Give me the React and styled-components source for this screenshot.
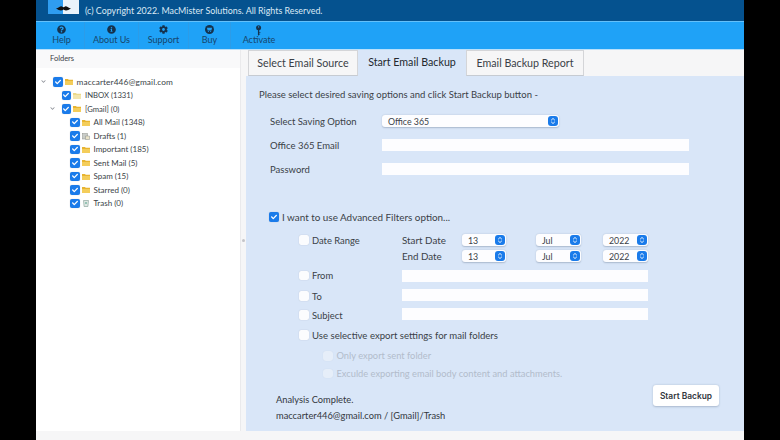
import React from 'react'
import styled, { createGlobalStyle } from 'styled-components'
import { FaCheck, FaChevronDown, FaCog, FaInfoCircle, FaQuestionCircle } from 'react-icons/fa'

const GlobalStyle = createGlobalStyle`
	html, body {
		margin: 0;
		background: #000;
		font-family: Lato, 'Open Sans', sans-serif;
		color: #3a3f47;
	}
	* {
		box-sizing: border-box;
	}
`

const tools = [
	{ name: 'Help', width: 46, icon: <FaQuestionCircle /> },
	{ name: 'About Us', width: 54, icon: <FaInfoCircle /> },
	{ name: 'Support', width: 50, icon: <FaCog /> },
	{ name: 'Buy', width: 42, icon: <BuyIcon /> },
	{ name: 'Activate', width: 56, icon: <KeyIcon /> },
]

const folders = [
	{ name: 'maccarter446@gmail.com', level: 0, open: true, icon: 'folder' },
	{ name: 'INBOX (1331)', level: 1, icon: 'inbox' },
	{ name: '[Gmail] (0)', level: 1, open: true, icon: 'folder' },
	{ name: 'All Mail (1348)', level: 2, icon: 'folder' },
	{ name: 'Drafts (1)', level: 2, icon: 'drafts' },
	{ name: 'Important (185)', level: 2, icon: 'folder' },
	{ name: 'Sent Mail (5)', level: 2, icon: 'folder' },
	{ name: 'Spam (15)', level: 2, icon: 'folder' },
	{ name: 'Starred (0)', level: 2, icon: 'folder' },
	{ name: 'Trash (0)', level: 2, icon: 'trash' },
]

function BuyIcon() {
	return (
		<svg viewBox='0 0 16 16' width='1em' height='1em'>
			<circle cx='8' cy='8' r='8' fill='currentColor' />
			<path d='M3.5 5h9l-1.2 4.6H4.7z' fill='#1fa2f7' />
			<circle cx='6' cy='11.6' r='1' fill='#1fa2f7' />
			<circle cx='10' cy='11.6' r='1' fill='#1fa2f7' />
		</svg>
	)
}

function KeyIcon() {
	return (
		<svg viewBox='0 0 12 18' width='0.8em' height='1.2em'>
			<circle cx='6' cy='4.5' r='4.2' fill='currentColor' />
			<circle cx='6' cy='3.2' r='1' fill='#1fa2f7' />
			<path d='M4.9 8h2.2v8.4L6 18l-1.1-1.6z' fill='currentColor' />
			<path d='M7 12h2v1.4H7zM7 14.6h1.5V16H7z' fill='currentColor' />
		</svg>
	)
}

function FolderIcon({ kind }) {
	if (kind === 'drafts') {
		return (
			<svg viewBox='0 0 8 8' width='8' height='8'>
				<rect x='0.5' y='1.5' width='5' height='5.5' fill='#c9ccc8' stroke='#8b8f8a' strokeWidth='0.5' />
				<path d='M3.5 4h4v3.5h-4z' fill='#e9e2c8' stroke='#8b8f8a' strokeWidth='0.5' />
			</svg>
		)
	}
	if (kind === 'trash') {
		return (
			<svg viewBox='0 0 8 8' width='8' height='8'>
				<path d='M1.5 1.5h5l-.6 6H2.1z' fill='#dfe8e4' stroke='#7f9a90' strokeWidth='0.6' />
				<path d='M3 4l2 0' stroke='#4f9f86' strokeWidth='1' />
			</svg>
		)
	}
	return (
		<svg viewBox='0 0 8 7' width='8' height='7'>
			<path d='M0 1h3l.7.8H8V7H0z' fill={kind === 'inbox' ? '#ecd98a' : '#e8b430'} />
			<path d='M0 3h8v4H0z' fill={kind === 'inbox' ? '#f3e6ad' : '#f4cd5a'} />
		</svg>
	)
}

const Check = ({ checked, muted }) => (
	<CheckBox $checked={checked} $muted={muted}>
		{checked && <FaCheck />}
	</CheckBox>
)

const Stepper = () => (
	<StepperBadge>
		<svg viewBox='0 0 8 10' width='6' height='8'>
			<path d='M1.5 4L4 1.6 6.5 4M1.5 6L4 8.4 6.5 6' fill='none' stroke='#fff' strokeWidth='1.2' />
		</svg>
	</StepperBadge>
)

const DropDown = ({ value, width }) => (
	<Select $width={width}>
		<span>{value}</span>
		<Stepper />
	</Select>
)

const FilterRow = ({ label, shift }) => (
	<Row $height={19}>
		<FilterLabel $shift={shift}>
			<Check />
			{label}
		</FilterLabel>
		<Field $width={246} />
	</Row>
)

const App = () => {
	return (
		<>
			<GlobalStyle />
			<Window>
				<Header>
					<Logo>
						<svg viewBox='0 0 18 6' width='17' height='5'>
							<path d='M0 3c3-.5 5-3 7-2.5 1 .3 1.6.8 2 1 .4-.2 1-.7 2-1 2-.5 4 2 7 2.5-3 1.5-5 3-7 2.2-.9-.3-1.5-.7-2-1-.5.3-1.100.7-2 1C5 6 3 4.5 0 3z' fill='#111' />
						</svg>
					</Logo>
					<Copyright>(c) Copyright 2022. MacMister Solutions. All Rights Reserved.</Copyright>
				</Header>
				<Toolbar>
					{tools.map((t) => (
						<Tool key={t.name} $width={t.width}>
							<ToolIcon>{t.icon}</ToolIcon>
							{t.name}
						</Tool>
					))}
				</Toolbar>
				<Body>
					<Sidebar>
						<SidebarTitle>Folders</SidebarTitle>
						<Tree>
							{folders.map((f) => (
								<TreeRow key={f.name} $level={f.level}>
									<Chevron>{f.open && <FaChevronDown />}</Chevron>
									<Check checked />
									<FolderSlot>
										<FolderIcon kind={f.icon} />
									</FolderSlot>
									<span>{f.name}</span>
								</TreeRow>
							))}
						</Tree>
					</Sidebar>
					<Splitter>
						<i />
					</Splitter>
					<Main>
						<Tabs>
							<Tab $width={110}>Select Email Source</Tab>
							<Tab $width={108} $active>
								Start Email Backup
							</Tab>
							<Tab $width={118}>Email Backup Report</Tab>
						</Tabs>
						<Panel>
							<Intro>Please select desired saving options and click Start Backup button -</Intro>
							<SavingForm>
								<Row $height={24}>
									<SavingLabel>Select Saving Option</SavingLabel>
									<DropDown value='Office 365' width={177} />
								</Row>
								<Row $height={24}>
									<SavingLabel>Office 365 Email</SavingLabel>
									<Field $width={307} />
								</Row>
								<Row $height={24}>
									<SavingLabel>Password</SavingLabel>
									<Field $width={307} />
								</Row>
							</SavingForm>
							<AdvancedOption>
								<Check checked />I want to use Advanced Filters option...
							</AdvancedOption>
							<Filters>
								<DateBlock>
									<FilterLabel $top>
										<Check />
										Date Range
									</FilterLabel>
									<DateRows>
										{['Start Date', 'End Date'].map((d) => (
											<DateRow key={d}>
												<DateLabel>{d}</DateLabel>
												<DropDown value='13' width={44} />
												<DropDown value='Jul' width={45} />
												<DropDown value='2022' width={45} />
											</DateRow>
										))}
									</DateRows>
								</DateBlock>
								<FilterRow label='From' shift={0} />
								<FilterRow label='To' shift={3} />
								<FilterRow label='Subject' shift={3} />
								<SelectiveOption>
									<Check />
									Use selective export settings for mail folders
								</SelectiveOption>
								<SubOption>
									<Check muted />
									Only export sent folder
								</SubOption>
								<SubOption>
									<Check muted />
									Exculde exporting email body content and attachments.
								</SubOption>
							</Filters>
							<Footer>
								<Status>
									<div>Analysis Complete.</div>
									<div>maccarter446@gmail.com / [Gmail]/Trash</div>
								</Status>
								<BackupButton>Start Backup</BackupButton>
							</Footer>
						</Panel>
					</Main>
				</Body>
				<BottomBar />
			</Window>
		</>
	)
}

const Window = styled.div`
	width: 708px;
	height: 440px;
	margin-left: 36px;
	background: #f6f6f7;
	display: flex;
	flex-direction: column;
	overflow: hidden;
`

const Header = styled.header`
	height: 21px;
	flex: none;
	background: #05528f;
	padding-left: 12px;
	display: flex;
	align-items: flex-start;
	gap: 6px;
`

const Logo = styled.div`
	width: 31px;
	height: 14px;
	padding-top: 3px;
	background: linear-gradient(90deg, #2f9df0 0 50%, #eaf3fb 50%);
	display: flex;
	align-items: center;
	justify-content: center;
`

const Copyright = styled.div`
	font-size: 8.9px;
	line-height: 22px;
	color: #dbe9f5;
`

const Toolbar = styled.nav`
	height: 28px;
	flex: none;
	background: #1fa2f7;
	border-top: 1px solid #64c0fa;
	padding-left: 3px;
	display: flex;
`

const Tool = styled.div`
	width: ${(p) => p.$width}px;
	display: flex;
	flex-direction: column;
	align-items: center;
	font-size: 9px;
	line-height: 10px;
	color: #17456c;
	border-right: 1px solid #2c9ce8;

	&:last-child {
		border-right: none;
	}
`

const ToolIcon = styled.div`
	height: 13px;
	padding-top: 3px;
	font-size: 9px;
	line-height: 0;
	color: #15324d;
`

const Body = styled.div`
	flex: 1;
	min-height: 0;
	display: flex;
	border-top: 1px solid #b9e0fb;
`

const Sidebar = styled.aside`
	width: 204px;
	flex: none;
	background: #fff;
`

const SidebarTitle = styled.div`
	height: 18px;
	padding-left: 14px;
	background: #f9f9fa;
	font-size: 7.5px;
	line-height: 17px;
`

const Tree = styled.div`
	padding-top: 7px;
`

const treeFont = [8.3, 7.7, 8]

const TreeRow = styled.div`
	height: 13.5px;
	padding-left: ${(p) => 5 + p.$level * 8.5}px;
	display: flex;
	align-items: center;
	font-size: ${(p) => treeFont[p.$level]}px;
	letter-spacing: ${(p) => (p.$level === 0 ? 0.1 : 0)}px;
	white-space: nowrap;
`

const Chevron = styled.span`
	width: 12px;
	flex: none;
	font-size: 5px;
	line-height: 0;
	color: #8b8f96;
`

const CheckBox = styled.span`
	width: 9.5px;
	height: 9.5px;
	flex: none;
	border-radius: ${(p) => (p.$muted ? '3px' : '2px')};
	background: ${(p) => (p.$checked ? '#1a7bea' : p.$muted ? '#e6eef9' : '#fbfcfe')};
	box-shadow: 0 0 1px rgba(60, 80, 110, ${(p) => (p.$muted ? 0.12 : 0.35)});
	color: #fff;
	font-size: 6px;
	display: inline-flex;
	align-items: center;
	justify-content: center;
`

const FolderSlot = styled.span`
	width: 14px;
	flex: none;
	padding-left: 2px;
	line-height: 0;
`

const Splitter = styled.div`
	width: 6px;
	flex: none;
	background: #f6f6f7;
	display: flex;
	align-items: center;
	justify-content: center;
	border-left: 1px solid #eaeaec;

	i {
		width: 3px;
		height: 3px;
		border-radius: 50%;
		background: #c4c4c8;
	}
`

const Main = styled.main`
	flex: 1;
	min-width: 0;
	display: flex;
	flex-direction: column;
`

const Tabs = styled.div`
	height: 26px;
	flex: none;
	padding-left: 2px;
	display: flex;
	background: #f6f6f7;
`

const Tab = styled.div`
	width: ${(p) => p.$width}px;
	text-align: center;
	font-size: 10.7px;
	line-height: 24px;
	color: ${(p) => (p.$active ? '#23282e' : '#3a3f47')};
	background: ${(p) => (p.$active ? '#d9e6f8' : '#f6f6f7')};
	border: ${(p) => (p.$active ? 'none' : '1px solid #d4d5d8')};
	border-bottom: ${(p) => (p.$active ? 'none' : '1px solid #c6cbd2')};
`

const Panel = styled.section`
	flex: 1;
	min-height: 0;
	padding-left: 13px;
	background: #d9e6f8;
	display: flex;
	flex-direction: column;
`

const Intro = styled.div`
	margin-top: 12px;
	font-size: 9.5px;
	line-height: 14px;
`

const SavingForm = styled.div`
	margin-top: 7px;
	padding-left: 11px;
`

const Row = styled.div`
	height: ${(p) => p.$height}px;
	display: flex;
	align-items: center;
`

const SavingLabel = styled.div`
	width: 112px;
	font-size: 9.5px;
`

const Field = styled.div`
	width: ${(p) => p.$width}px;
	height: 12px;
	background: #fdfdff;
`

const Select = styled.div`
	width: ${(p) => p.$width}px;
	height: 12px;
	flex: none;
	padding: 0 1px 0 6px;
	border-radius: 3px;
	background: #fdfdff;
	box-shadow: 0 0.5px 1.5px rgba(60, 80, 110, 0.3);
	font-size: 8.8px;
	display: flex;
	align-items: center;
	justify-content: space-between;
`

const StepperBadge = styled.span`
	width: 10px;
	height: 10px;
	border-radius: 3px;
	background: #1a7bea;
	display: flex;
	align-items: center;
	justify-content: center;
`

const AdvancedOption = styled.div`
	margin-top: 29px;
	padding-left: 10px;
	height: 14px;
	font-size: 9.9px;
	display: flex;
	align-items: center;
	gap: 3.5px;
`

const Filters = styled.div`
	margin-top: 10px;
	padding-left: 40px;
	display: flex;
	flex-direction: column;
`

const DateBlock = styled.div`
	display: flex;
`

const FilterLabel = styled.div`
	width: 103px;
	flex: none;
	font-size: 9.4px;
	display: flex;
	align-items: center;
	gap: 3.5px;
	height: ${(p) => (p.$top ? '12px' : 'auto')};
	padding-top: ${(p) => p.$shift || 0}px;
`

const DateRows = styled.div`
	display: flex;
	flex-direction: column;
	gap: 4px;
	margin-bottom: 4px;
`

const DateRow = styled.div`
	height: 12px;
	display: flex;
	align-items: center;
	font-size: 9.8px;
	gap: 30px;

	& > :nth-child(4) {
		margin-left: -8px;
	}
`

const DateLabel = styled.div`
	width: 30px;
	white-space: nowrap;
`

const SelectiveOption = styled.div`
	height: 24px;
	font-size: 9.6px;
	display: flex;
	align-items: center;
	gap: 3.5px;
`

const SubOption = styled.div`
	height: 17.5px;
	padding-left: 24px;
	font-size: 9.3px;
	color: #b2bccb;
	display: flex;
	align-items: center;
	gap: 4px;
`

const Footer = styled.div`
	margin-top: 3px;
	padding: 0 25px 0 17px;
	display: flex;
	justify-content: space-between;
	align-items: flex-start;
`

const Status = styled.div`
	margin-top: 7px;
	font-size: 9.3px;
	line-height: 16px;
	color: #33373d;
`

const BackupButton = styled.button`
	width: 66px;
	height: 21px;
	padding: 0;
	border: none;
	border-radius: 3px;
	background: #fff;
	box-shadow: 0 0.5px 2px rgba(60, 80, 110, 0.3);
	font-family: Inter, 'Open Sans', sans-serif;
	font-size: 8.4px;
	font-weight: 600;
	color: #33373d;
`

const BottomBar = styled.div`
	height: 9px;
	flex: none;
	background: #f6f6f7;
`

export default App
